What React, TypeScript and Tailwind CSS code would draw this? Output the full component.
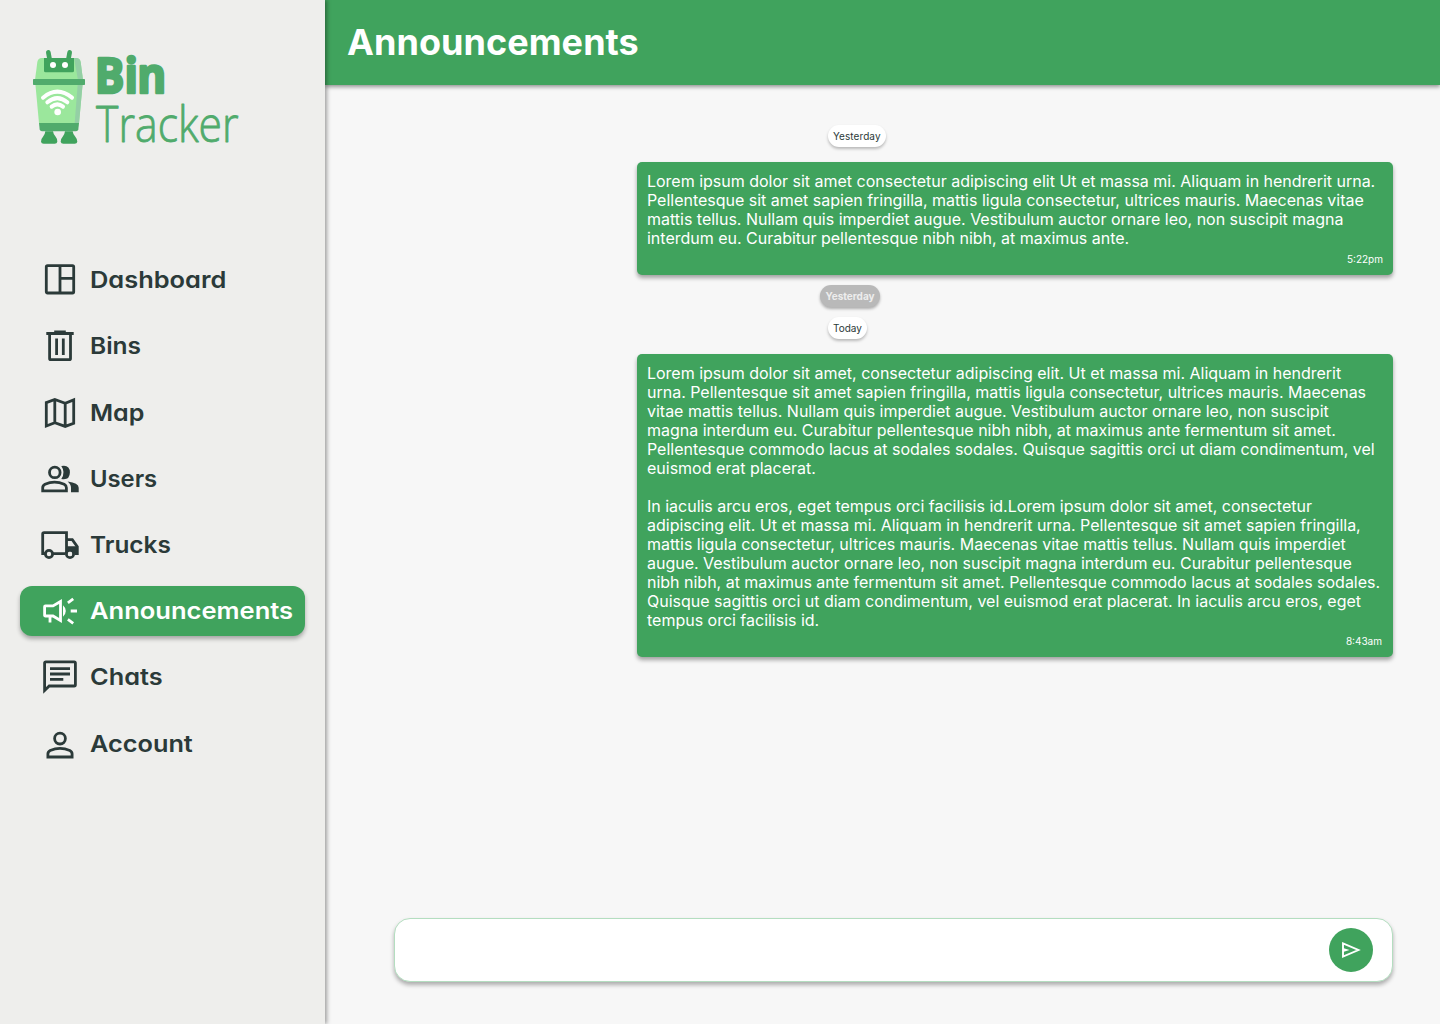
import type { ReactNode } from "react";

function Logo() {
  return (
    <svg className="ml-5 mt-10 h-[115px] w-[240px] shrink-0 overflow-visible" viewBox="0 0 720 345" role="img" aria-label="Bin Tracker">
      <g stroke="#40A35D" strokeWidth="14" strokeLinecap="round">
        <path d="M85 37l4 22M149 37l-4 22" />
      </g>
      <path d="M66 54H168Q180 54 182 66L189 120 177 250H57L45 120 52 66Q54 54 66 54Z" fill="#9BE79C" />
      <path d="M162 54H168Q180 54 182 66L189 120 177 250H164L174 120Z" fill="#94CFA5" />
      <path d="M72 54H162V92Q162 97 157 97H77Q72 97 72 92Z" fill="#40A35D" />
      <circle cx="99" cy="75" r="9" fill="#fff" />
      <circle cx="135" cy="75" r="9" fill="#fff" />
      <rect x="39" y="117" width="156" height="18" rx="2" fill="#50AB6C" />
      <path d="M57 249H177L175 268Q174 274 168 274H66Q60 274 59 268Z" fill="#50AB6C" />
      <path d="M76 274H99Q100 284 107 290Q113 297 112 305Q111 311 104 311H71Q64 311 63 305Q63 296 69 290Q75 284 76 274Z" fill="#40A35D" />
      <path d="M135 274H158Q159 284 166 290Q172 297 172 305Q171 311 164 311H130Q123 311 122 305Q122 296 128 290Q134 284 135 274Z" fill="#40A35D" />
      <g fill="none" stroke="#fff" strokeWidth="12" strokeLinecap="round">
        <path d="M69 173Q112 137 156 173" />
        <path d="M82 187Q112 162 142 187" />
        <path d="M95 200Q112 186 129 200" />
      </g>
      <circle cx="113" cy="216" r="10" fill="#fff" />
      <text x="249 348 391" y="159" transform="scale(0.9 1)" className="font-['Open_Sans'] text-[147px] font-bold" fill="#50AB6C" stroke="#50AB6C" strokeWidth="8" strokeLinejoin="round">Bin</text>
      <text x="228" y="305" textLength="428" lengthAdjust="spacingAndGlyphs" className="font-['Open_Sans'] text-[148px] font-light" fill="#50AB6C" stroke="#50AB6C" strokeWidth="2.5" strokeLinejoin="round">Tracker</text>
    </svg>
  );
}

function Icon({ children }: { children: ReactNode }) {
  return (
    <svg className="h-10 w-10 shrink-0" viewBox="0 0 40 40" fill="none" stroke="currentColor" strokeWidth="2.8">
      {children}
    </svg>
  );
}

const items = [
  {
    label: "Dashboard",
    stretch: "scale-x-[1.105] pt-[2px]",
    icon: (
      <Icon>
        <rect x="6.3" y="6.6" width="27.4" height="27.4" rx="1.2" />
        <path d="M20 6.6V34M20 19.3H33.7" />
      </Icon>
    ),
  },
  {
    label: "Bins",
    stretch: "scale-x-[1.065] pt-[2px]",
    icon: (
      <Icon>
        <path d="M6.3 8.5H33.7M14.2 6.9H25.8M9.6 8.5V33.4Q9.6 34.7 10.9 34.7H29.2Q30.5 34.7 30.5 33.4V8.5M16.6 13.6V30M23.3 13.6V30" />
      </Icon>
    ),
  },
  {
    label: "Map",
    stretch: "scale-x-[1.09] pt-[2px]",
    icon: (
      <Icon>
        <path d="M6.3 10.6L14.8 7.5 25.2 11.2 33.7 7.9V31.2L25.2 34.4 14.8 30.7 6.3 34ZM14.8 7.5V30.7M25.2 11.2V34.4" />
      </Icon>
    ),
  },
  {
    label: "Users",
    stretch: "scale-x-[1.035] pt-[2px]",
    icon: (
      <Icon>
        <circle cx="14.8" cy="14.4" r="5.3" />
        <path d="M2.7 32.9V29.8Q2.7 27.5 5 26.3Q14.5 22 24.2 26.3Q26.4 27.5 26.4 29.8V32.9Z" />
        <path d="M21.3 20.9Q25.8 14.4 21.3 8Q29.7 6.3 29.9 14.4Q29.7 22.5 21.3 20.9Z M27.6 23.4Q38.7 24.7 38.7 29.8V34.3H31V29.8Q31 26 27.6 23.4Z" fill="currentColor" stroke="none" />
      </Icon>
    ),
  },
  {
    label: "Trucks",
    stretch: "scale-x-[1.06] pt-[2px]",
    icon: (
      <Icon>
        <path d="M5.6 28.6H2.7V9.1Q2.7 7.7 4.1 7.7H26.5V28.6M12.5 28.6H25.3M26.5 14.7H32.3L37.3 21.6V28.6H34.5" />
        <circle cx="9" cy="29" r="3.6" />
        <circle cx="30" cy="29" r="3.6" />
        <path d="M26.5 21.2H37.5V28.7H34.5Q33 25.2 30 25.2Q28 25.2 26.5 27Z" fill="currentColor" stroke="none" />
        <circle cx="30" cy="29" r="2.2" fill="#EEEEEC" stroke="none" />
      </Icon>
    ),
  },
  {
    label: "Announcements",
    stretch: "scale-x-[1.11]",
    icon: (
      <Icon>
        <path d="M4.6 15.7Q4.6 14.9 5.4 14.9H13L20.5 10.5V29.5L13 25H5.4Q4.6 25 4.6 24.2ZM10 25V31.6" />
        <path d="M30.7 20H37M27.9 11.8L33.2 7.9M27.9 28.4L33.2 32.3" />
        <path d="M23 14.3Q25.8 16.8 25.8 20T23 25.7Z" fill="currentColor" stroke="none" />
      </Icon>
    ),
  },
  {
    label: "Chats",
    stretch: "scale-x-[1.1]",
    icon: (
      <Icon>
        <path d="M4.6 33.5V6.1Q4.6 4.9 5.8 4.9H34.2Q35.4 4.9 35.4 6.1V27.8Q35.4 29 34.2 29H9.2ZM10 11.6H30M10 17H30M10 22.3H23.3" />
      </Icon>
    ),
  },
  {
    label: "Account",
    stretch: "scale-x-[1.1] pt-[2px]",
    icon: (
      <Icon>
        <circle cx="20" cy="14.6" r="5.4" />
        <path d="M7.9 33V29.9Q7.9 27.7 10.2 26.5Q20 22.2 29.8 26.5Q32.1 27.7 32.1 29.9V33Z" />
      </Icon>
    ),
  },
];

function DatePill({ label, offset }: { label: string; offset: string }) {
  return (
    <div className={`flex h-[22px] w-fit items-center rounded-full bg-white px-[5px] text-[10px] text-[#2B3A39] shadow-[0_2px_3px_rgba(0,0,0,0.25)] ${offset}`}>
      {label}
    </div>
  );
}

function Message({ lines, time, offset, timeInset = "" }: { lines: string[]; time: string; offset: string; timeInset?: string }) {
  return (
    <article className={`ml-[312px] w-[756px] rounded-[5px] bg-[#40A35D] px-[10px] pb-[10px] pt-[10px] text-white shadow-[0_3px_4px_rgba(0,0,0,0.35)] ${offset}`}>
      {lines.map((line, i) => (
        <p key={i} className="h-[19px] whitespace-nowrap text-[16px] leading-[19px] tracking-[-0.01px]">{line}</p>
      ))}
      <time className={`mt-[5px] block text-right text-[10px] leading-[12px] ${timeInset}`}>{time}</time>
    </article>
  );
}

const first = [
  "Lorem ipsum dolor sit amet consectetur adipiscing elit Ut et massa mi. Aliquam in hendrerit urna.",
  "Pellentesque sit amet sapien fringilla, mattis ligula consectetur, ultrices mauris. Maecenas vitae",
  "mattis tellus. Nullam quis imperdiet augue. Vestibulum auctor ornare leo, non suscipit magna",
  "interdum eu. Curabitur pellentesque nibh nibh, at maximus ante.",
];

const second = [
  "Lorem ipsum dolor sit amet, consectetur adipiscing elit. Ut et massa mi. Aliquam in hendrerit",
  "urna. Pellentesque sit amet sapien fringilla, mattis ligula consectetur, ultrices mauris. Maecenas",
  "vitae mattis tellus. Nullam quis imperdiet augue. Vestibulum auctor ornare leo, non suscipit",
  "magna interdum eu. Curabitur pellentesque nibh nibh, at maximus ante fermentum sit amet.",
  "Pellentesque commodo lacus at sodales sodales. Quisque sagittis orci ut diam condimentum, vel",
  "euismod erat placerat.",
  "",
  "In iaculis arcu eros, eget tempus orci facilisis id.Lorem ipsum dolor sit amet, consectetur",
  "adipiscing elit. Ut et massa mi. Aliquam in hendrerit urna. Pellentesque sit amet sapien fringilla,",
  "mattis ligula consectetur, ultrices mauris. Maecenas vitae mattis tellus. Nullam quis imperdiet",
  "augue. Vestibulum auctor ornare leo, non suscipit magna interdum eu. Curabitur pellentesque",
  "nibh nibh, at maximus ante fermentum sit amet. Pellentesque commodo lacus at sodales sodales.",
  "Quisque sagittis orci ut diam condimentum, vel euismod erat placerat. In iaculis arcu eros, eget",
  "tempus orci facilisis id.",
];

export default function App() {
  return (
    <div className="flex h-[1024px] w-[1440px] overflow-hidden bg-[#F7F7F7] font-['Inter',sans-serif]">
      <aside className="relative z-10 flex w-[325px] shrink-0 flex-col bg-[#EEEEEC] shadow-[2px_0_4px_rgba(0,0,0,0.35)]">
        <Logo />
        <nav className="mt-[99px] flex flex-col gap-[16.4px] px-5">
          {items.map((item) => (
            <a
              key={item.label}
              className={`flex h-[50px] items-center gap-[10px] rounded-[12px] pl-5 ${
                item.label === "Announcements" ? "bg-[#40A35D] text-white shadow-[0_3px_4px_rgba(0,0,0,0.3)]" : "text-[#2B3A39]"
              }`}
            >
              {item.icon}
              <span className={`origin-left whitespace-nowrap text-[23px] font-semibold [font-feature-settings:'cv11'] ${item.stretch}`}>{item.label}</span>
            </a>
          ))}
        </nav>
      </aside>
      <main className="flex grow flex-col">
        <header className="flex h-[85px] shrink-0 items-center bg-[#40A35D] pb-[2px] pl-[22px] text-white shadow-[0_2px_4px_rgba(0,0,0,0.4)]">
          <h1 className="text-[36px] font-bold tracking-[0.06px]">Announcements</h1>
        </header>
        <section className="flex grow flex-col pt-10">
          <DatePill label="Yesterday" offset="ml-[503px] tracking-[0.07px]" />
          <Message lines={first} time="5:22pm" offset="mt-[15px]" />
          <div className="mb-[10px] ml-[495px] mt-[10px] flex h-[22px] w-[60px] items-center justify-center rounded-full bg-[#B9B9B9] text-[10px] font-bold text-[#EDEDED] shadow-[0_2px_3px_rgba(0,0,0,0.3)]">
            Yesterday
          </div>
          <DatePill label="Today" offset="ml-[503px]" />
          <Message lines={second} time="8:43am" offset="mt-[15px]" timeInset="pr-px" />
        </section>
        <form className="mb-[42px] ml-[69px] flex h-[64px] w-[999px] items-center justify-end rounded-[16px] border border-[#B4DEC0] bg-white pr-[19px] shadow-[0_3px_4px_rgba(0,0,0,0.3)]">
          <button type="button" aria-label="Send" className="flex size-11 items-center justify-center rounded-full bg-[#40A35D] text-white">
            <svg className="h-6 w-6" viewBox="0 0 24 24" fill="none" stroke="currentColor" strokeWidth="1.9">
              <path d="M4 5.4L19.4 12 4 18.6Z" />
              <path d="M4 10L10.5 12 4 14Z" fill="currentColor" stroke="none" />
            </svg>
          </button>
        </form>
      </main>
    </div>
  );
}
